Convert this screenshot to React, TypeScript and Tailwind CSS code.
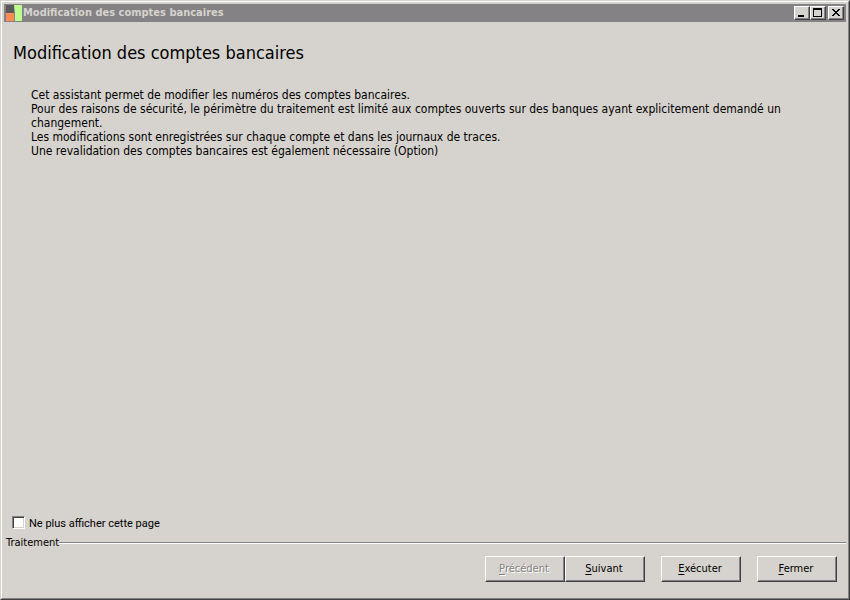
import type { ReactNode } from "react";

const raised =
  "border border-t-white border-l-white border-r-[#404040] border-b-[#404040] bg-[#d6d3ce] shadow-[inset_-1px_-1px_0_#848284]";

const paragraphs = [
  "Cet assistant permet de modifier les numéros des comptes bancaires.",
  "Pour des raisons de sécurité, le périmètre du traitement est limité aux comptes ouverts sur des banques ayant explicitement demandé un changement.",
  "Les modifications sont enregistrées sur chaque compte et dans les journaux de traces.",
  "Une revalidation des comptes bancaires est également nécessaire (Option)",
];

const CaptionButton = ({
  label,
  children,
}: {
  label: string;
  children: ReactNode;
}) => (
  <button
    type="button"
    aria-label={label}
    className={`flex h-3.5 w-4 items-center justify-center ${raised}`}
  >
    <svg
      width="10"
      height="10"
      viewBox="0 0 10 10"
      shapeRendering="crispEdges"
      fill="none"
      stroke="#000"
    >
      {children}
    </svg>
  </button>
);

const WizardButton = ({
  label,
  disabled,
}: {
  label: string;
  disabled?: boolean;
}) => (
  <button
    type="button"
    disabled={disabled}
    className={`h-[26px] w-20 pr-0.5 text-[11px] leading-[14px] ${raised} ${
      disabled ? "text-[#848284] [text-shadow:1px_1px_0_#fff]" : "text-black"
    }`}
  >
    <span className="underline underline-offset-2">{label[0]}</span>
    {label.slice(1)}
  </button>
);

const TitleBar = () => (
  <header className="flex h-[18px] items-center bg-[#848284] pr-0.5">
    <svg width="18" height="18" viewBox="0 0 18 18" aria-hidden="true">
      <path d="M2 1h8v8H2z" fill="#5a5a5a" />
      <path d="M2 9h8v8H2z" fill="#ff8c52" />
      <path d="M10 1h8v16h-7V9z" fill="#bdff8c" />
    </svg>
    <span className="ml-px flex-1 text-[11px] font-bold leading-[14px] text-[#d6d3ce]">
      Modification des comptes bancaires
    </span>
    <div className="flex">
      <CaptionButton label="Réduire">
        <path d="M1 8h6" strokeWidth="2" />
      </CaptionButton>
      <CaptionButton label="Agrandir">
        <path d="M0 1h9" strokeWidth="2" />
        <path d="M.5 1v7.500h8V1" />
      </CaptionButton>
      <div className="w-0.5" />
      <CaptionButton label="Fermer la fenêtre">
        <path
          d="M1 1h2v1h1v1h2V2h1V1h2v1H8v1H7v1H6v1h1v1h1v1h1v1H7V7H6V6H4v1H3v1H1V7h1V6h1V5h1V4H3V3H2V2H1z"
          fill="#000"
          stroke="none"
        />
      </CaptionButton>
    </div>
  </header>
);

const App = () => (
  <div className="flex min-h-screen flex-col border border-t-[#d6d3ce] border-l-[#d6d3ce] border-r-[#404040] border-b-[#404040] bg-[#d6d3ce] font-['DejaVu_Sans_Condensed','DejaVu_Sans',sans-serif] text-black">
    <div className="flex flex-1 flex-col border border-t-white border-l-white border-r-[#848284] border-b-[#848284] p-0.5">
      <TitleBar />

      <main className="flex-1 px-2">
        <h1 className="mt-[19px] pl-px text-[18px] leading-6">
          Modification des comptes bancaires
        </h1>
        <div className="mt-[23px] mr-9 ml-[19px] text-[12px] leading-[14px]">
          {paragraphs.map((p) => (
            <p key={p}>{p}</p>
          ))}
        </div>
      </main>

      <label className="flex items-start gap-1 self-start pl-2 font-['Roboto',sans-serif] text-[11px] leading-4">
        <input
          type="checkbox"
          className="size-[13px] appearance-none border border-t-[#848284] border-l-[#848284] border-r-white border-b-white bg-white shadow-[inset_1px_1px_0_#404040,inset_-1px_-1px_0_#d6d3ce] checked:bg-black"
        />
        Ne plus afficher cette page
      </label>

      <fieldset className="mt-1">
        <legend className="flex w-full items-center pl-0.5 text-[11px] leading-[14px]">
          Traitement
          <span className="h-0.5 flex-1 border-t border-b border-t-[#848284] border-b-white" />
        </legend>
        <div className="flex justify-end gap-4 pt-1.5 pr-[9px] pb-3.5">
          <div className="flex">
            <WizardButton label="Précédent" disabled />
            <WizardButton label="Suivant" />
          </div>
          <WizardButton label="Exécuter" />
          <WizardButton label="Fermer" />
        </div>
      </fieldset>
    </div>
  </div>
);

export default App;
